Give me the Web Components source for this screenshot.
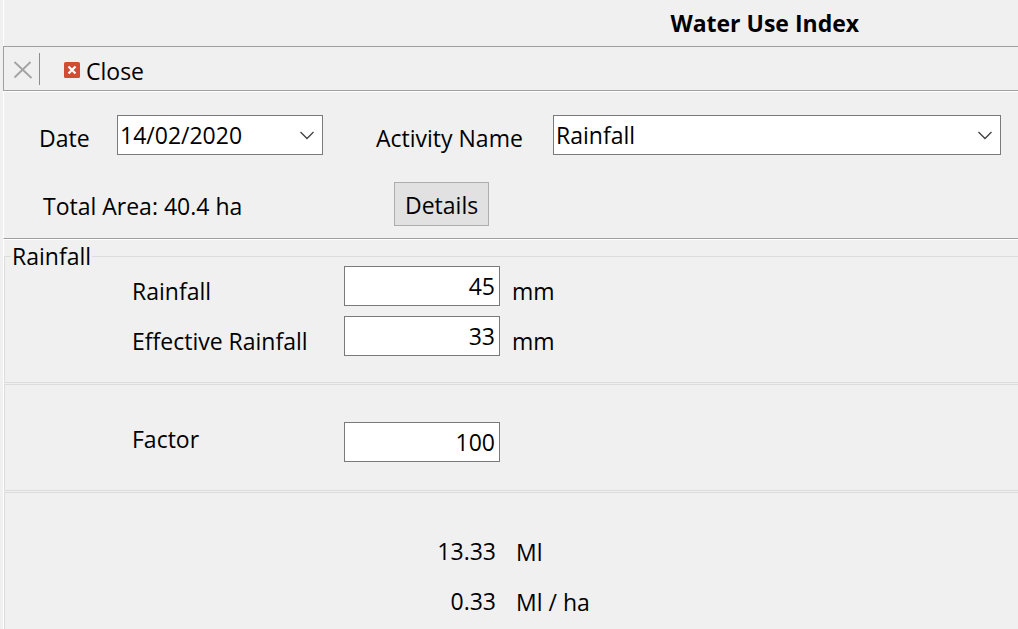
<!DOCTYPE html>
<html lang="en">
<head>
<meta charset="utf-8">
<title>Water Use Index</title>
<style>
  body {
    margin: 0;
    background: #f0f0f0;
    color: #000;
    font: 23px/32px "Open Sans", "Noto Sans", sans-serif;
  }
</style>
</head>
<body>
<water-use-page></water-use-page>

<script>
  class BaseElement extends HTMLElement {
    constructor() {
      super();
      this.attachShadow({ mode: "open" });
    }
    connectedCallback() {
      this.shadowRoot.innerHTML =
        "<style>*, ::before, ::after { box-sizing: border-box; }</style>" + this.render();
    }
    attr(name) { return this.getAttribute(name) || ""; }
  }

  class ToolBar extends BaseElement {
    render() {
      return `
        <style>
          :host {
            display: flex; align-items: center; height: 45px;
            border: 1px solid #a0a0a0; border-right: 0;
            box-shadow: 0 1px #fff;
          }
          button {
            display: flex; align-items: center; margin: 0; padding: 0;
            border: 0; background: none; font: inherit; color: inherit;
          }
          svg { display: block; }
          .cancel { padding: 3px 6px 0 9px; }
          .rule { width: 1px; height: 32px; background: #8d8d8d; }
          .close { margin-left: 24px; padding-top: 4px; gap: 6px; }
          .close svg { margin-bottom: 2px; }
        </style>
        <button class="cancel" type="button" aria-label="Cancel">
          <svg width="20" height="18" viewBox="0 0 20 18"><path d="M1.5 1l17 16M17.5 1L1.5 16.5" fill="none" stroke="#a3a3a3" stroke-width="1.8"/></svg>
        </button>
        <span class="rule"></span>
        <button class="close" type="button">
          <svg width="16" height="16" viewBox="0 0 16 16"><rect width="16" height="16" rx="1.5" fill="#d04c34"/><path d="M4.500 4.500l7 7M11.500 4.500l-7 7" fill="none" stroke="#fff" stroke-width="2.3"/></svg>
          <span><slot></slot></span>
        </button>`;
    }
  }
  customElements.define("tool-bar", ToolBar);

  class ComboField extends BaseElement {
    render() {
      return `
        <style>
          :host { display: flex; align-items: center; }
          label { width: var(--label-width); padding-top: 6px; white-space: nowrap; }
          .box { display: grid; flex: 1; min-width: 0; }
          select, svg { grid-area: 1 / 1; }
          select {
            width: 100%; height: 40px; margin: 0; padding: 0 32px 0 2px;
            appearance: none; border: 1px solid #7a7a7a; border-radius: 0;
            background: #fff; color: inherit; font: inherit;
          }
          svg { place-self: center end; margin-right: 9px; pointer-events: none; }
        </style>
        <label for="choice">${this.attr("label")}</label>
        <div class="box">
          <select id="choice"><option>${this.attr("value")}</option></select>
          <svg width="14" height="9" viewBox="0 0 14 9"><path d="M.5 1L7 7.5 13.5 1" fill="none" stroke="#404040" stroke-width="1.3"/></svg>
        </div>`;
    }
  }
  customElements.define("combo-field", ComboField);

  class PushButton extends BaseElement {
    render() {
      return `
        <style>
          :host { display: block; }
          button {
            height: 44px; padding: 2px 10px 0; border: 1px solid #adadad;
            border-radius: 0; background: #e1e1e1; color: inherit; font: inherit;
          }
        </style>
        <button type="button"><slot></slot></button>`;
    }
  }
  customElements.define("push-button", PushButton);

  class GroupBox extends BaseElement {
    render() {
      const caption = this.attr("caption");
      return `
        <style>
          :host { display: block; }
          fieldset {
            margin: 0; padding: 0; min-width: 0;
            border: 1px solid #dcdcdc; border-right: 0;
          }
          legend { margin-left: 6px; padding: 0 1px; line-height: 18px; }
          .rows { display: grid; gap: 10px; padding: var(--rows-padding); }
        </style>
        <fieldset>
          ${caption ? `<legend>${caption}</legend>` : ""}
          <div class="rows"><slot></slot></div>
        </fieldset>`;
    }
  }
  customElements.define("group-box", GroupBox);

  const ROW_STYLE = `
    :host {
      display: grid; align-items: center; height: 40px;
      grid-template-columns: 212px 156px 1fr;
    }`;

  class NumberRow extends BaseElement {
    render() {
      return `
        <style>
          ${ROW_STYLE}
          label, span { padding: var(--text-padding, 10px 0 0); white-space: nowrap; }
          span { margin-left: 12px; }
          input {
            width: 100%; height: 40px; margin: 0; padding: 0 4px;
            border: 1px solid #7a7a7a; border-radius: 0; background: #fff;
            color: inherit; font: inherit; text-align: right;
          }
        </style>
        <label for="amount">${this.attr("label")}</label>
        <input id="amount" type="text" inputmode="decimal" value="${this.attr("value")}">
        <span><slot></slot></span>`;
    }
  }
  customElements.define("number-row", NumberRow);

  class ResultRow extends BaseElement {
    render() {
      return `
        <style>
          ${ROW_STYLE}
          output { grid-column: 2; padding-right: 4px; text-align: right; }
          span { margin-left: 16px; padding-top: 2px; }
        </style>
        <output>${this.attr("value")}</output>
        <span><slot></slot></span>`;
    }
  }
  customElements.define("result-row", ResultRow);

  class WaterUsePage extends BaseElement {
    render() {
      return `
        <style>
          :host { display: block; min-height: 100vh; padding-left: 3px; }
          h1 {
            margin: 0; padding: 7px 0 7px 50%; border-left: 1px solid #fff;
            font-size: 23px; line-height: 32px; font-weight: 700; text-align: center;
          }
          .details {
            padding: 24px 17px 12px 35px; border-left: 1px solid #fff;
            border-bottom: 1px solid #a0a0a0; box-shadow: 0 1px #fff;
          }
          .line { display: flex; align-items: center; }
          .line + .line { margin-top: 27px; }
          .date { --label-width: 78px; width: 284px; margin-right: 53px; }
          .activity { --label-width: 177px; flex: 1; }
          .area { width: 355px; padding: 4px 0 0 4px; }
          .groups {
            display: grid; gap: 1px; padding-top: 8px;
            border-left: 1px solid #fff;
          }
          .rain { --rows-padding: 0 0 27px 127px; }
          .factor { --rows-padding: 37px 0 28px 127px; --text-padding: 0 0 6px; }
          .total { --rows-padding: 38px 0 8px 127px; }
        </style>
        <h1>Water Use Index</h1>
        <tool-bar>Close</tool-bar>
        <section class="details">
          <div class="line">
            <combo-field class="date" label="Date" value="14/02/2020"></combo-field>
            <combo-field class="activity" label="Activity Name" value="Rainfall"></combo-field>
          </div>
          <div class="line">
            <span class="area">Total Area: 40.4 ha</span>
            <push-button>Details</push-button>
          </div>
        </section>
        <section class="groups">
          <group-box class="rain" caption="Rainfall">
            <number-row label="Rainfall" value="45">mm</number-row>
            <number-row label="Effective Rainfall" value="33">mm</number-row>
          </group-box>
          <group-box class="factor">
            <number-row label="Factor" value="100"></number-row>
          </group-box>
          <group-box class="total">
            <result-row value="13.33">Ml</result-row>
            <result-row value="0.33">Ml / ha</result-row>
          </group-box>
        </section>`;
    }
  }
  customElements.define("water-use-page", WaterUsePage);
</script>
</body>
</html>
